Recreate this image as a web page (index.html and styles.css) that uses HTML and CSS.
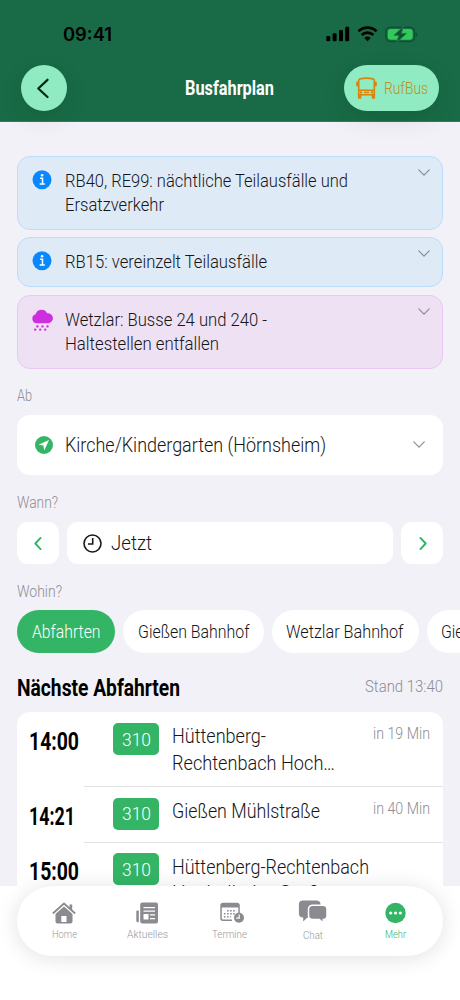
FILE: index.html
```html
<!DOCTYPE html>
<html lang="de">
<head>
<meta charset="utf-8">
<title>Busfahrplan</title>
<link rel="stylesheet" href="styles.css">
</head>
<body>
<div class="phone">
  <header class="header">
    <div class="status">
      <span class="clock" data-width="49">09:41</span>
      <div class="status-icons">
        <svg width="24" height="16" viewBox="0 0 24 16"><rect x="0.3" y="10" width="4" height="5.3" rx="1.1"/><rect x="6.6" y="7.3" width="4" height="8" rx="1.1"/><rect x="13" y="4" width="4" height="11.3" rx="1.1"/><rect x="19.2" y="0.7" width="4" height="14.6" rx="1.1"/></svg>
        <svg width="21" height="16" viewBox="0 0 21 16"><path d="M1.500 5.400a12.800 12.800 0 0 1 18 0M4.700 9a8.200 8.200 0 0 1 11.600 0" fill="none" stroke="#000" stroke-width="2.700"/><path d="M10.500 15.200 7.300 12a4.700 4.700 0 0 1 6.400 0z"/></svg>
        <svg width="33" height="17" viewBox="0 0 33 17"><rect x="0.900" y="1.300" width="28.600" height="14.200" rx="4.600" fill="none" stroke="#115034" stroke-width="1.500"/><path d="M30.700 6.200c2.200.7 2.200 3.800 0 4.500z" fill="#115034"/><rect x="2.700" y="3.100" width="25" height="10.600" rx="3" fill="#33c95a"/><path d="M18.500.2 9 9.300h5l-2.400 7.300 9.900-9.200h-5.200z" fill="#115034" stroke="#1b7c47" stroke-width="1"/></svg>
      </div>
    </div>
    <div class="toolbar">
      <button class="round-button"><svg width="46" height="46" viewBox="0 0 46 46"><path d="M26.500 14.800 17.300 23.500 26.500 32" fill="none" stroke="#06280f" stroke-width="2.300" stroke-linecap="round" stroke-linejoin="round"/></svg></button>
      <h1 class="title"><span data-width="89">Busfahrplan</span></h1>
      <button class="rufbus">
        <svg width="21" height="22" viewBox="0 0 21 22" fill="#d5860a"><path fill-rule="evenodd" d="M4 .9Q10.500-.5 17 .9 19.100 1.400 19.100 3.600V18.600H1.900V3.600Q1.900 1.400 4 .9zM5 2.500Q3.500 2.700 3.500 4V12.400H17.500V4Q17.500 2.700 16 2.500 10.500 1.700 5 2.500zM3.500 14v2.900h14V14z"/><rect x="0.200" y="4.500" width="2" height="5" rx="1"/><rect x="18.800" y="4.500" width="2" height="5" rx="1"/><path d="M1.900 17.500h3.400v3.300q0 .9-.9.900H2.800q-.9 0-.9-.9zM15.700 17.500h3.400v3.300q0 .9-.9.900h-1.600q-.9 0-.9-.9z"/><circle cx="5" cy="15.400" r="1.200"/><circle cx="16" cy="15.400" r="1.200"/><rect x="8" y="14.700" width="5" height="1.500"/></svg>
        <span data-width="44">RufBus</span>
      </button>
    </div>
  </header>
  <main class="content">
    <section class="alerts">
      <article class="alert">
        <svg class="alert-icon" width="22" height="22" viewBox="0 0 22 22"><circle cx="10" cy="9.700" r="9.500" fill="#0788ff"/><path d="M8 8.200h2.500v5.400M7.600 13.900h5.200" fill="none" stroke="#fff" stroke-width="1.500"/><circle cx="10.100" cy="5.300" r="1.300" fill="#fff"/></svg>
        <p class="alert-text"><span data-width="283">RB40, RE99: nächtliche Teilausfälle und</span><span data-width="99">Ersatzverkehr</span></p>
        <svg class="chevron" width="12" height="8" viewBox="0 0 12 8"><path d="M.8.8 6 6.200 11.200.8"/></svg>
      </article>
      <article class="alert">
        <svg class="alert-icon" width="22" height="22" viewBox="0 0 22 22"><circle cx="10" cy="9.700" r="9.500" fill="#0788ff"/><path d="M8 8.200h2.500v5.400M7.600 13.900h5.200" fill="none" stroke="#fff" stroke-width="1.500"/><circle cx="10.100" cy="5.300" r="1.300" fill="#fff"/></svg>
        <p class="alert-text"><span data-width="202">RB15: vereinzelt Teilausfälle</span></p>
        <svg class="chevron" width="12" height="8" viewBox="0 0 12 8"><path d="M.8.8 6 6.200 11.200.8"/></svg>
      </article>
      <article class="alert alert-pink">
        <svg class="alert-icon" width="22" height="22" viewBox="0 0 22 22" fill="#cc2ee0"><path d="M4.800 14.300A4.600 4.600 0 0 1 3.600 5.300 6.200 6.200 0 0 1 15.100 4.200 5 5 0 0 1 16.500 14.300z"/><circle cx="5.400" cy="17.400" r="1.200"/><circle cx="10.500" cy="17.400" r="1.200"/><circle cx="15.500" cy="17.400" r="1.200"/><circle cx="3.200" cy="20.600" r="1.200"/><circle cx="8.200" cy="20.600" r="1.200"/><circle cx="13.200" cy="20.600" r="1.200"/></svg>
        <p class="alert-text"><span data-width="202">Wetzlar: Busse 24 und 240 -</span><span data-width="154">Haltestellen entfallen</span></p>
        <svg class="chevron" width="12" height="8" viewBox="0 0 12 8"><path d="M.8.8 6 6.200 11.200.8"/></svg>
      </article>
    </section>
    <p class="label label-from"><span data-width="15">Ab</span></p>
    <div class="stop">
      <svg width="18" height="18" viewBox="0 0 18 18"><circle cx="9" cy="9" r="9" fill="#34b566"/><path d="M14 4 3.500 8.800l4.900.8.800 5z" fill="#fff"/></svg>
      <span data-width="261">Kirche/Kindergarten (Hörnsheim)</span>
      <svg class="chevron" width="12" height="8" viewBox="0 0 12 8"><path d="M.8.8 6 6.200 11.200.8"/></svg>
    </div>
    <p class="label label-when"><span data-width="41">Wann?</span></p>
    <div class="when">
      <button class="step"><svg width="8" height="13" viewBox="0 0 8 13"><path d="M6.600.9 1.300 6.500l5.300 5.600"/></svg></button>
      <div class="time-field"><svg width="19" height="19" viewBox="0 0 19 19"><circle cx="9.500" cy="9.500" r="8.500"/><path d="M9.700 4v6H5"/></svg><span data-width="41">Jetzt</span></div>
      <button class="step"><svg width="8" height="13" viewBox="0 0 8 13"><path d="M2.400.9l5.300 5.600-5.300 5.600"/></svg></button>
    </div>
    <p class="label label-where"><span data-width="45">Wohin?</span></p>
    <div class="chips">
      <button class="chip chip-active"><span data-width="68.500">Abfahrten</span></button>
      <button class="chip"><span data-width="111.500">Gießen Bahnhof</span></button>
      <button class="chip"><span data-width="117.500">Wetzlar Bahnhof</span></button>
      <button class="chip"><span data-width="110">Gießen Rathaus</span></button>
    </div>
    <div class="list-head">
      <h2><span data-width="163">Nächste Abfahrten</span></h2>
      <span class="as-of" data-width="78">Stand 13:40</span>
    </div>
    <section class="departures">
      <div class="row row-tall">
        <span class="time" data-width="50">14:00</span>
        <div class="trip"><b class="line"><span data-width="29">310</span></b>
        <p class="dest"><span data-width="94">Hüttenberg-</span><span data-width="163">Rechtenbach Hoch…</span></p>
        <span class="eta" data-width="57">in 19 Min</span></div>
      </div>
      <div class="row">
        <span class="time" data-width="46">14:21</span>
        <div class="trip"><b class="line"><span data-width="29">310</span></b>
        <p class="dest"><span data-width="148">Gießen Mühlstraße</span></p>
        <span class="eta" data-width="57">in 40 Min</span></div>
      </div>
      <div class="row">
        <span class="time" data-width="50">15:00</span>
        <div class="trip"><b class="line"><span data-width="29">310</span></b>
        <p class="dest"><span data-width="197">Hüttenberg-Rechtenbach</span><span data-width="165">Hochelheim Großer</span></p></div>
      </div>
    </section>
  </main>
  <footer class="footer">
    <nav class="tabs">
      <a class="tab"><svg width="24" height="22" viewBox="0 0 24 22"><path d="M.8 11.500 12 1.500 23.200 11.500" fill="none" stroke="#8b8a90" stroke-width="1.700"/><path d="M17.500 2.500H20.200V9L17.500 6.500z"/><path fill-rule="evenodd" d="M12 4.600 20.500 12V19.500Q20.500 21.500 18.500 21.500H5.500Q3.500 21.500 3.500 19.500V12zM9.300 14v6h5.200v-6z"/></svg><span data-width="25">Home</span></a>
      <a class="tab"><svg width="24" height="22" viewBox="0 0 24 22"><path d="M1.300 9.500q0-1 1.200-1h1.300v11.800h-1q-1.500 0-1.500-1.500z"/><path fill-rule="evenodd" d="M7.500.5h13.500q2 0 2 2v17q0 2-2 2H7.500q-2.300 0-2.300-2v-17q0-2 2.300-2zM8.500 5v1.300h11.500V5zM8.500 8.500v1.300h11.500V8.500zM8.500 12v5.500h5V12zM15 12.200v1.300h5v-1.300zM15 16v1.300h5V16z"/></svg><span data-width="41">Aktuelles</span></a>
      <a class="tab"><svg class="calendar" width="26" height="22" viewBox="0 0 26 22"><path fill-rule="evenodd" d="M4 .8h14q2.800 0 2.800 2.500V11h-1.500V5.500H2.800V16q0 1.500 1.500 1.500H13v1.500H4Q1.300 19 1.300 16.500V3.300Q1.300.8 4 .8z"/><path d="M8 8.800h9.500M4.900 11.800h12M4.900 14.800h7" fill="none" stroke="#8b8a90" stroke-width="1.500" stroke-dasharray="1.600 1.500"/><circle cx="20" cy="15.800" r="5"/><path d="M20.200 12.600v3.500h-3" fill="none" stroke="#fff" stroke-width="1.200"/></svg><span data-width="35">Termine</span></a>
      <a class="tab tab-chat"><svg width="30" height="24" viewBox="0 0 30 24"><path d="M5 .5h13q4.500 0 4.500 4v9q0 4-4 4H9.500l-4.300 4V17.500Q.9 17.500.9 13.500v-9Q.9.500 5 .5z"/><path d="M15 5.300h9.500q4.500 0 4.500 4V15.500q0 4-3.700 4v3.500l-4-3.500H15q-4.500 0-4.500-4V9.300q0-4 4.500-4z" stroke="#fff" stroke-width="1.500"/></svg><span data-width="20">Chat</span></a>
      <a class="tab tab-active"><svg width="22" height="22" viewBox="0 0 22 22"><circle cx="10.500" cy="11" r="10.200"/><g fill="#fff"><circle cx="5.700" cy="11" r="1.600"/><circle cx="10.500" cy="11" r="1.600"/><circle cx="15.300" cy="11" r="1.600"/></g></svg><span data-width="21">Mehr</span></a>
    </nav>
  </footer>
</div>
<script src="script.js"></script>
</body>
</html>
```
FILE: styles.css
```css
* { box-sizing: border-box; }
body { margin: 0; background: #fff; font-family: Roboto, "Liberation Sans", sans-serif; font-weight: 350; color: #151618; }
button { border: 0; padding: 0; font: inherit; color: inherit; }
p, h1, h2 { margin: 0; }
svg { display: block; flex: none; overflow: visible; }
[data-width] { display: inline-block; flex: none; white-space: nowrap; }
.fitted { display: inline-block; transform-origin: 0 50%; }
.phone { width: 460px; height: 1000px; overflow: hidden; background: #f2f1f7; display: flex; flex-direction: column; }

.header { height: 122px; flex: none; background: #186b46; border-bottom: 1px solid #39795a; }
.status { height: 65px; padding: 0 42px 0 63px; display: flex; justify-content: space-between; align-items: flex-start; }
.clock { margin-top: 23.500px; font: 600 18px/22px Inter, sans-serif; color: #000; }
.status-icons { display: flex; gap: 7px; padding-top: 26px; }
.toolbar { display: grid; grid-template-columns: 95px 1fr 95px; align-items: center; padding: 0 21px; height: 46px; }
.round-button { width: 46px; height: 46px; border-radius: 23px; background: #90ebc2; box-shadow: 0 8px 26px rgba(0,0,0,.09); }
.title { text-align: center; color: #fff; font-size: 21px; line-height: 24px; font-weight: 700; }
.title [data-width] { vertical-align: top; margin-right: 1px; }
.rufbus { height: 46px; border-radius: 23px; background: #90ebc2; box-shadow: 0 8px 26px rgba(0,0,0,.09); color: #c28f1d; font-size: 17px; display: flex; align-items: center; gap: 6.500px; padding-left: 12px; }

.content { height: 764px; flex: none; overflow: hidden; padding: 33.600px 17px 0; }
.alerts { display: grid; gap: 7.700px; }
.alert { display: grid; grid-template-columns: 33px 1fr 12px; align-items: start; padding: 12px 12.500px 12px 14px; border: 1px solid #bbdcfb; border-radius: 13px; background: #dfeaf7; }
.alert-pink { background: #efe1f4; border-color: #e9c6f3; }
.alert-icon { margin-top: 1px; }
.alert-text { display: flex; flex-direction: column; font-size: 19px; line-height: 24px; }
.chevron { fill: none; stroke: #8c8d94; stroke-width: 1.200; stroke-linecap: round; stroke-linejoin: round; }
.label { color: #8e8d93; font-size: 16px; line-height: 20px; height: 20px; }
.label-from { margin-top: 17.500px; }
.stop { margin-top: 8.800px; height: 60px; border-radius: 13px; background: #fff; display: flex; align-items: center; padding: 0 18px; gap: 12px; font-size: 20.500px; }
.stop .chevron { margin-left: auto; }
.label-when { margin-top: 18px; }
.when { margin-top: 9px; display: grid; grid-template-columns: 42px 1fr 42px; gap: 8px; height: 42px; }
.step, .time-field { background: #fff; border-radius: 11px; display: flex; align-items: center; }
.step { justify-content: center; }
.step svg { fill: none; stroke: #2db564; stroke-width: 1.900; stroke-linecap: round; stroke-linejoin: round; }
.time-field { gap: 9px; padding-left: 15.500px; font-size: 20px; }
.time-field svg { fill: none; stroke: #17181a; stroke-width: 1.600; }
.label-where { margin-top: 17.500px; }
.chips { margin-top: 8.700px; display: flex; gap: 8px; height: 43px; margin-right: -17px; overflow: hidden; }
.chip { flex: none; height: 43px; padding: 0 14.700px; border-radius: 21.500px; background: #fff; font-size: 18.500px; }
.chip-active { background: #34b566; color: #fff; }
.list-head { display: flex; justify-content: space-between; margin-top: 20px; height: 30px; line-height: 30px; }
h2 { font-size: 24.800px; line-height: 30px; font-weight: 700; color: #000; }
.as-of { font-size: 16.500px; line-height: 28px; color: #8e8d93; }
.departures { margin-top: 9px; background: #fff; border-radius: 13px; }
.row { display: flex; align-items: stretch; justify-content: space-between; padding-left: 12px; height: 55.600px; }
.row-tall { height: 74.600px; }
.time { font-size: 26.300px; line-height: 30px; font-weight: 700; color: #000; padding-top: 13.600px; }
.trip { flex: 0 0 359px; display: flex; align-items: flex-start; padding: 10.500px 13px 0 29px; border-bottom: 1px solid #e3e3e6; }
.line { display: flex; align-items: center; justify-content: center; width: 46px; height: 32.300px; border-radius: 5px; background: #34b566; color: #fff; font-size: 19px; font-weight: 350; }
.dest { display: flex; flex-direction: column; margin-left: 13px; font-size: 20px; line-height: 26.700px; padding-top: .4px; }
.eta { margin-left: auto; font-size: 16px; line-height: 22px; color: #8e8d93; }

.footer { flex: 1; background: #fff; padding: 0 17px; }
.tabs { position: relative; height: 69.500px; border-radius: 35px; background: #fff; box-shadow: 0 2px 22px rgba(0,0,0,.12); display: grid; grid-template-columns: repeat(5, 82.800px); justify-content: center; padding-top: 15.500px; }
.tab { display: flex; flex-direction: column; align-items: center; gap: 3.500px; fill: #8b8a90; color: #9a999e; font-size: 11.500px; line-height: 15px; }
.calendar { margin-left: 4px; }
.tab-chat { margin-top: -2px; gap: 4.500px; }
.tab-active { fill: #34b566; color: #34b566; }
```
FILE: script.js
```js
// Condenses each label to the column width given in its data-width attribute.
document.querySelectorAll('[data-width]').forEach(function (el) {
  var target = parseFloat(el.dataset.width);
  var inner = document.createElement('span');
  inner.className = 'fitted';
  inner.textContent = el.textContent;
  el.textContent = '';
  el.appendChild(inner);
  var natural = inner.getBoundingClientRect().width;
  el.style.width = target + 'px';
  inner.style.transform = 'scaleX(' + target / natural + ')';
});
```
